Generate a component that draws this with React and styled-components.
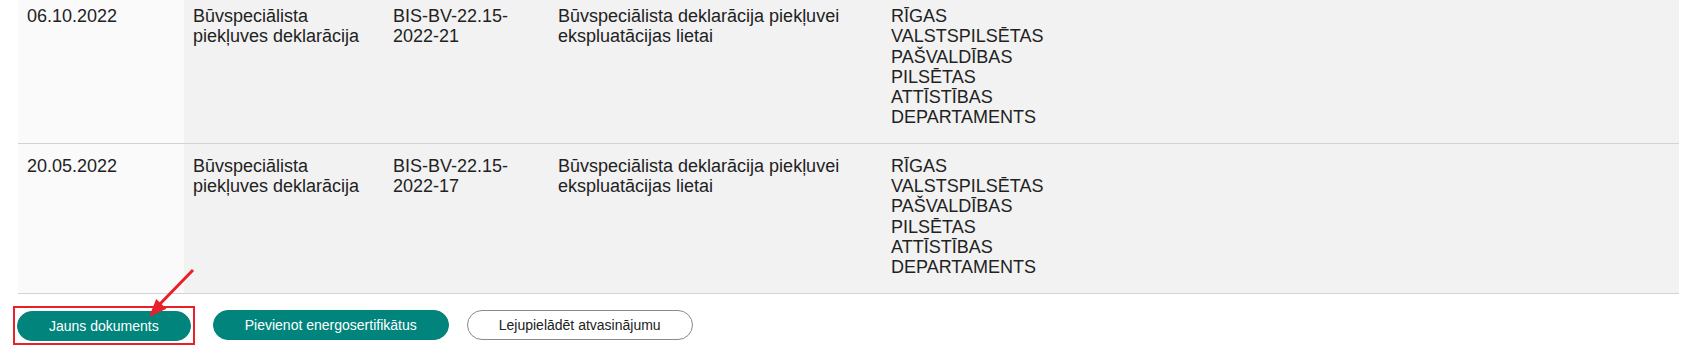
import styled, { createGlobalStyle } from "styled-components";

const GlobalStyle = createGlobalStyle`
  html, body {
    margin: 0;
    padding: 0;
    background: #ffffff;
  }
  body {
    font-family: "Liberation Sans", Arial, sans-serif;
    color: #222222;
  }
`;

const Page = styled.div`
  width: 1701px;
  height: 349px;
  overflow: hidden;
  padding: 0 22px 0 18px;
  box-sizing: border-box;
`;

const Table = styled.table`
  width: 100%;
  margin-top: -6px;
  border-collapse: collapse;
  table-layout: fixed;
  font-size: 18px;
  line-height: 20.3px;
`;

const Col = styled.col`
  width: ${(p) => (p.$w ? `${p.$w}px` : "auto")};
`;

const Row = styled.tr`
  border-bottom: 1px solid #d3d3d3;
`;

const Cell = styled.td`
  vertical-align: top;
  padding: 12px 9px 15px;
  background: ${(p) => (p.$light ? "#fafafa" : "#f2f2f2")};
  color: #222222;
  overflow-wrap: break-word;
`;

const ButtonBar = styled.div`
  display: flex;
  align-items: center;
  gap: 18px;
  margin-top: 12px;
  margin-left: -5px;
`;

const Highlight = styled.div`
  position: relative;
  display: flex;
  padding: 3px 2px 2px 2px;
  border: 2px solid #e8202a;
`;

const Button = styled.button`
  height: 30px;
  padding: 0 31px;
  box-sizing: border-box;
  border-radius: 15px;
  font-family: "Liberation Sans", Arial, sans-serif;
  font-size: 14px;
  white-space: nowrap;
  cursor: pointer;
  border: 1px solid ${(p) => (p.$outline ? "#8a8a8a" : "#00847c")};
  background: ${(p) => (p.$outline ? "#ffffff" : "#00847c")};
  color: ${(p) => (p.$outline ? "#222222" : "#ffffff")};
`;

const Arrow = styled.svg`
  position: absolute;
  left: 127px;
  top: -45px;
  width: 60px;
  height: 60px;
  overflow: visible;
  pointer-events: none;
`;

const rows = [
  {
    date: "06.10.2022",
    type: "Būvspeciālista piekļuves deklarācija",
    number: "BIS-BV-22.15-2022-21",
    title: "Būvspeciālista deklarācija piekļuvei ekspluatācijas lietai",
    org: "RĪGAS VALSTSPILSĒTAS PAŠVALDĪBAS PILSĒTAS ATTĪSTĪBAS DEPARTAMENTS",
  },
  {
    date: "20.05.2022",
    type: "Būvspeciālista piekļuves deklarācija",
    number: "BIS-BV-22.15-2022-17",
    title: "Būvspeciālista deklarācija piekļuvei ekspluatācijas lietai",
    org: "RĪGAS VALSTSPILSĒTAS PAŠVALDĪBAS PILSĒTAS ATTĪSTĪBAS DEPARTAMENTS",
  },
];

function breakNumber(num) {
  // the reference wraps after the hyphen following "22.15"
  const i = num.indexOf("-2022");
  return (
    <>
      {num.slice(0, i + 1)}
      <br />
      {num.slice(i + 1)}
    </>
  );
}

export default function App() {
  return (
    <Page>
      <GlobalStyle />
      <Table>
        <colgroup>
          <Col $w={166} />
          <Col $w={200} />
          <Col $w={165} />
          <Col $w={333} />
          <Col $w={188} />
          <Col />
        </colgroup>
        <tbody>
          {rows.map((r) => (
            <Row key={r.number}>
              <Cell $light>{r.date}</Cell>
              <Cell>{r.type}</Cell>
              <Cell>{breakNumber(r.number)}</Cell>
              <Cell>{r.title}</Cell>
              <Cell>{r.org}</Cell>
              <Cell />
            </Row>
          ))}
        </tbody>
      </Table>
      <ButtonBar>
        <Highlight>
          <Button>Jauns dokuments</Button>
          <Arrow viewBox="0 0 60 60">
            <line x1="51" y1="7" x2="15" y2="44" stroke="#e8202a" strokeWidth="3" />
            <polygon points="7,54 24.4,45.7 14.2,36.1" fill="#e8202a" />
          </Arrow>
        </Highlight>
        <Button>Pievienot energosertifikātus</Button>
        <Button $outline>Lejupielādēt atvasinājumu</Button>
      </ButtonBar>
    </Page>
  );
}
